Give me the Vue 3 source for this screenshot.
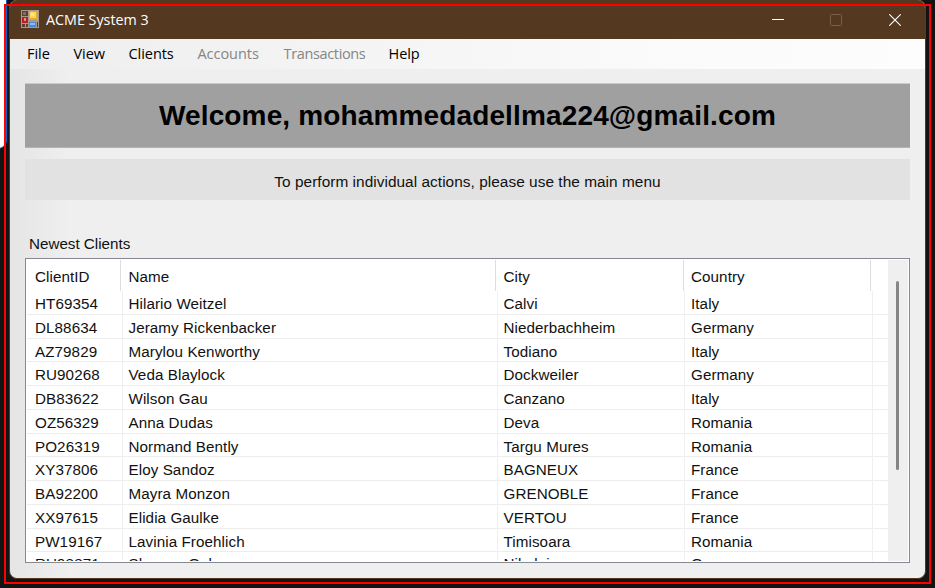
<script setup>
const menus = [
  { label: 'File', id: 'file' },
  { label: 'View', id: 'view' },
  { label: 'Clients', id: 'clients' },
  { label: 'Accounts', id: 'accounts', disabled: true },
  { label: 'Transactions', id: 'transactions', disabled: true },
  { label: 'Help', id: 'help' },
]
const columns = ['ClientID', 'Name', 'City', 'Country']
const clients = [
  ['HT69354', 'Hilario Weitzel', 'Calvi', 'Italy'],
  ['DL88634', 'Jeramy Rickenbacker', 'Niederbachheim', 'Germany'],
  ['AZ79829', 'Marylou Kenworthy', 'Todiano', 'Italy'],
  ['RU90268', 'Veda Blaylock', 'Dockweiler', 'Germany'],
  ['DB83622', 'Wilson Gau', 'Canzano', 'Italy'],
  ['OZ56329', 'Anna Dudas', 'Deva', 'Romania'],
  ['PO26319', 'Normand Bently', 'Targu Mures', 'Romania'],
  ['XY37806', 'Eloy Sandoz', 'BAGNEUX', 'France'],
  ['BA92200', 'Mayra Monzon', 'GRENOBLE', 'France'],
  ['XX97615', 'Elidia Gaulke', 'VERTOU', 'France'],
  ['PW19167', 'Lavinia Froehlich', 'Timisoara', 'Romania'],
  ['RU98871', 'Shawna Gulas', 'Nikolaia', 'Germany'],
]
</script>

<template>
  <div class="desktop">
    <div class="behind"></div>
    <main class="window">
      <header class="titlebar">
        <svg class="app-icon" width="18" height="18" viewBox="0 0 18 18">
          <rect width="18" height="18" fill="#a49a91" />
          <rect x="1" y="1" width="6" height="5" fill="#57402f" />
          <rect x="2" y="2" width="3" height="3" fill="#826c5a" />
          <rect x="1" y="7" width="6" height="6" fill="#b52025" />
          <rect x="3" y="8" width="2" height="3" fill="#e88880" />
          <rect x="1" y="14" width="3" height="3" fill="#57402f" />
          <rect x="5" y="14" width="2" height="3" fill="#57402f" />
          <rect x="8" y="1" width="9" height="9" fill="#e8a91d" />
          <rect x="9" y="2" width="6" height="6" fill="#ffd65b" />
          <rect x="10" y="3" width="3" height="3" fill="#ffe58a" />
          <rect x="8" y="12" width="7" height="5" fill="#4b87dd" />
          <rect x="9" y="13" width="5" height="2" fill="#8dbbfa" />
          <rect x="16" y="12" width="1" height="5" fill="#57402f" />
        </svg>
        <h1>ACME System 3</h1>
        <div class="controls">
          <svg viewBox="0 0 12 12"><path d="M0 5.5H12" stroke="#fff" /></svg>
          <svg viewBox="0 0 12 12"><rect x=".5" y=".5" width="11" height="11" rx="1" fill="none" stroke="#79614c" /></svg>
          <svg viewBox="0 0 12 12"><path d="M.3.3 11.7 11.7M11.7.3.3 11.7" stroke="#fff" stroke-width="1.1" /></svg>
        </div>
      </header>
      <nav>
        <span v-for="m in menus" :key="m.id" :class="[m.id, { disabled: m.disabled }]">{{ m.label }}</span>
      </nav>
      <section class="content">
        <h2><span>Welcome, mohammedadellma224@gmail.com</span></h2>
        <p class="hint"><span>To perform individual actions, please use the main menu</span></p>
        <h3>Newest Clients</h3>
        <div class="list">
          <div class="table">
            <div class="head">
              <span v-for="c in columns" :key="c">{{ c }}</span><i></i>
            </div>
            <div v-for="row in clients" :key="row[0]" class="row">
              <span v-for="cell in row" :key="cell">{{ cell }}</span><i></i>
            </div>
          </div>
          <div class="scrollbar"><div class="thumb"></div></div>
        </div>
      </section>
    </main>
    <div class="outline"></div>
  </div>
</template>

<style>
body { margin: 0; }
</style>

<style scoped>
* { box-sizing: border-box; }
.desktop { position: relative; width: 935px; height: 588px; overflow: hidden; background: #131313; padding-left: 9px; font-family: "Liberation Sans", Arial, sans-serif; color: #111; }
.behind { position: absolute; left: -20px; top: -10px; width: 27px; height: 159px; background: #fff; border-right: 1px solid #0864ca; border-bottom: 1px solid #0864ca; border-radius: 0 0 9px 0; }
.window { position: relative; width: 917px; height: 579px; overflow: hidden; background: #efefef; border: 1px solid #553820; border-top: 0; border-radius: 8px; display: flex; flex-direction: column; }
.titlebar { height: 39px; flex: none; display: flex; align-items: center; background: #553820; color: #fff; padding-left: 11px; font-family: "Open Sans", "Noto Sans", sans-serif; }
.app-icon { display: block; margin-top: -1px; }
h1 { margin: 0 0 0 7px; font-size: 14.3px; line-height: 20px; font-weight: 400; letter-spacing: 0; }
.controls { display: flex; gap: 46px; margin-left: auto; margin-right: 24px; }
.controls svg { display: block; width: 12px; height: 12px; }
.controls svg:nth-child(-n+2) { margin-left: -1px; margin-right: 1px; }
nav { height: 30px; flex: none; display: flex; align-items: center; padding: 0 0 2px 17px; background: linear-gradient(90deg, #eee, #f2f2f2 25%, #fbfbfb 75%, #fdfdfd); font-family: "Open Sans", "Noto Sans", sans-serif; font-size: 14.5px; white-space: nowrap; }
nav span { flex: none; letter-spacing: -.05px; color: #000; }
.file { width: 46.5px; }
.view { width: 55px; }
.clients { width: 69px; }
.accounts { width: 86px; }
.transactions { width: 105px; letter-spacing: -.35px; }
nav .disabled { color: #858585; }
.content { padding: 14px 15px 0; flex: 1; background: linear-gradient(90deg, rgba(0,0,0,.045), transparent 60px); display: flex; flex-direction: column; }
h2 { margin: 0; height: 65px; flex: none; display: flex; align-items: center; justify-content: center; background: #a0a0a0; border-top: 1px solid #cacaca; border-bottom: 1px solid #b3b3b3; color: #000; font-size: 28px; line-height: 32px; letter-spacing: .14px; }
.hint { margin: 11px 0 0; height: 41px; flex: none; display: flex; align-items: center; justify-content: center; background: #e2e2e2; font-size: 15.4px; padding-top: 4px; letter-spacing: .04px; }
h3 { margin: 35px 0 0 4px; font-size: 15.2px; line-height: 18px; font-weight: 400; }
.list { height: 305px; margin-top: 5px; border: 1px solid #858994; background: #fff; display: flex; padding: 1px; overflow: hidden; }
.table { width: 861px; height: 301px; overflow: hidden; font-size: 15.2px; letter-spacing: .08px; }
.head, .row { display: grid; grid-template-columns: 94px 375px 187.5px 187.5px 1fr; }
.head { height: 31px; line-height: 33px; }
.head span { border-right: 1px solid #dedede; padding-left: 7.5px; white-space: nowrap; height: 31px; }
.row { height: 23.78px; line-height: 26px; grid-template-columns: 95.5px 375px 187.5px 187.5px 1fr; border-bottom: 1px solid #ededed; white-space: nowrap; }
.row:last-child { line-height: 24px; }
.row span { padding-left: 6px; border-right: 1px solid #f0f0f0; overflow: visible; min-width: 0; }
.head span:first-child, .row span:first-child { padding-left: 8px; }
.scrollbar { width: 20px; background: #efefef; padding: 21px 0 0 8px; }
.thumb { width: 3px; height: 189px; background: #858585; border-radius: 1.5px; }
.outline { position: absolute; left: 4px; top: 4px; width: 927px; height: 580px; border: 2px solid #f00; }
</style>
